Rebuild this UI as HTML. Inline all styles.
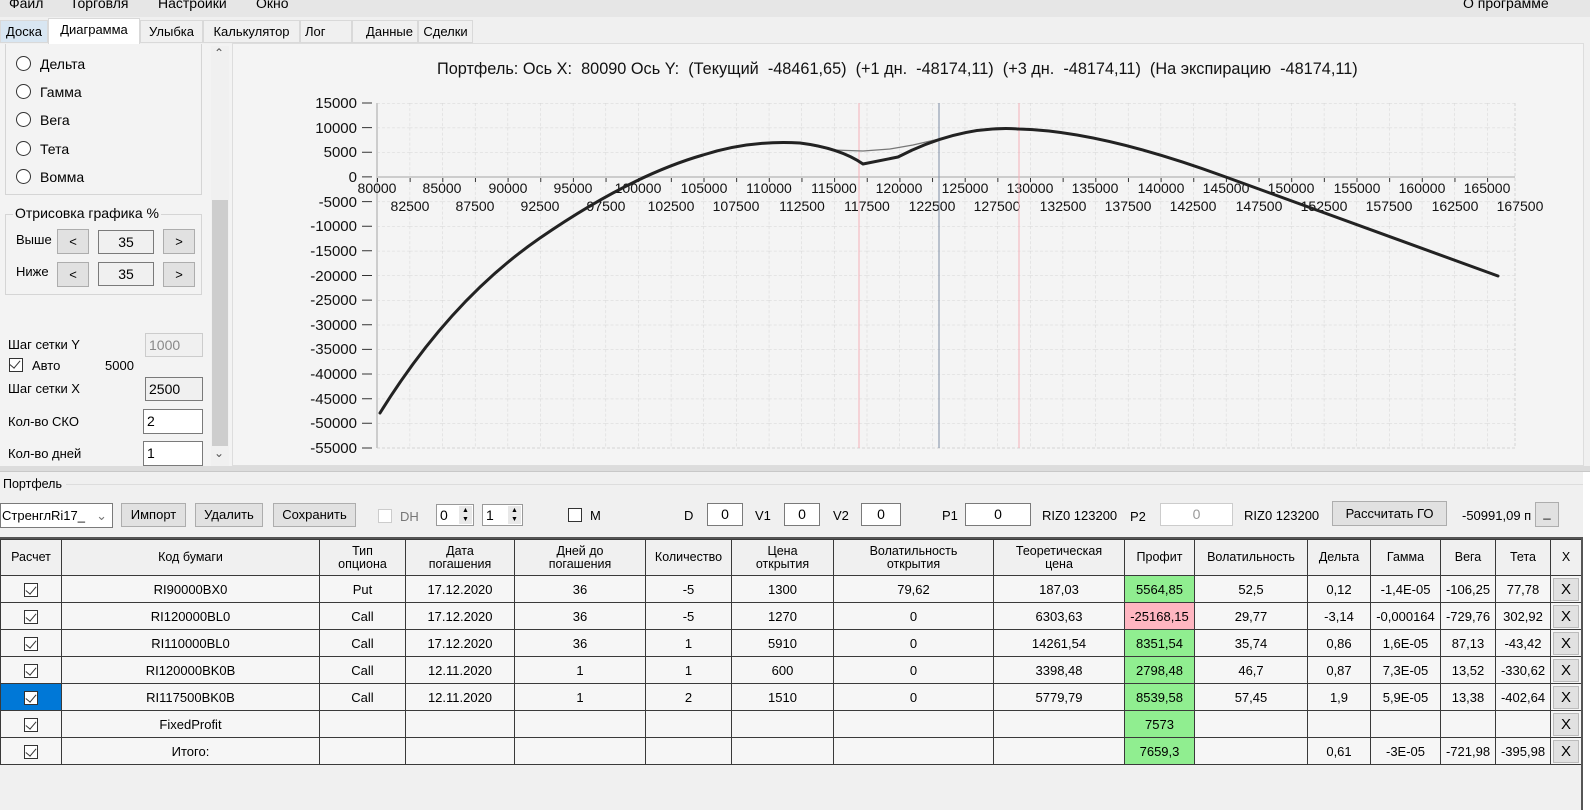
<!DOCTYPE html>
<html><head><meta charset="utf-8">
<style>
*{box-sizing:border-box;margin:0;padding:0}
body{width:1590px;height:810px;overflow:hidden;background:#f0f0f0;font-family:"Liberation Sans",sans-serif;font-size:13px;color:#000;position:relative}
.a{position:absolute}
.menu{left:0;top:0;width:1590px;height:17px;background:#e6e6e6;font-size:14px}
.tab{position:absolute;top:20px;height:23px;border:1px solid #d9d9d9;background:#f0f0f0;font-size:13px;line-height:21px;text-align:center}
.box{border:1px solid #d5d5d5}
.rad{width:15px;height:15px;border:1px solid #333;border-radius:50%;background:#fff}
.btn{position:absolute;background:#e1e1e1;border:1px solid #adadad;text-align:center;font-size:13px}
.tb{position:absolute;background:#fff;border:1px solid #7a7a7a;font-size:14px;padding-left:3px}
.cb{position:absolute;width:14px;height:14px;border:1px solid #333;background:#fff}
table{border-collapse:collapse;position:absolute;left:0;top:539px;table-layout:fixed;width:1581px}
td{border:1px solid #3a3a3a;background:#f6f6f6;text-align:center;font-size:13px;height:27px;padding:0;overflow:hidden;white-space:nowrap}
tr.h td{background:#f0f0f0;height:36px;font-size:12.5px;line-height:13px}
td.g{background:#90ee90}td.p{background:#ffb6c1}
.x{display:block;margin:1px 2px;height:23px;background:#e1e1e1;border:1px solid #bbb;line-height:21px;font-size:15px}
.ck{display:inline-block;width:14px;height:14px;border:1px solid #333;position:relative;vertical-align:middle;background:#fff}
.ck:after{content:"";position:absolute;left:3px;top:0px;width:5px;height:9px;border:solid #333;border-width:0 1.5px 1.5px 0;transform:rotate(40deg)}
</style></head><body>
<div class="a menu"><span class="a" style="left:9px;top:-5px">Файл</span><span class="a" style="left:70px;top:-5px">Торговля</span><span class="a" style="left:158px;top:-5px">Настройки</span><span class="a" style="left:256px;top:-5px">Окно</span><span class="a" style="left:1463px;top:-5px">О программе</span></div>
<div class="tab" style="left:0;width:48px;background:#d8e6f2">Доска</div>
<div class="tab" style="left:48px;width:92px;top:18px;height:27px;background:#fff;border-bottom:none">Диаграмма</div>
<div class="tab" style="left:140px;width:63px">Улыбка</div>
<div class="tab" style="left:203px;width:97px">Калькулятор</div>
<div class="tab" style="left:300px;width:52px;text-align:left;padding-left:4px">Лог</div>
<div class="tab" style="left:352px;width:66px;text-align:right;padding-right:4px">Данные</div>
<div class="tab" style="left:418px;width:55px">Сделки</div>
<div class="a" style="left:0;top:44px;width:232px;height:422px;background:#f3f3f3"></div>
<div class="a box" style="left:5px;top:44px;width:197px;height:151px;border-top:none"></div>
<div class="a rad" style="left:16px;top:56px"></div><span class="a" style="left:40px;top:56px;font-size:14px">Дельта</span>
<div class="a rad" style="left:16px;top:84px"></div><span class="a" style="left:40px;top:84px;font-size:14px">Гамма</span>
<div class="a rad" style="left:16px;top:112px"></div><span class="a" style="left:40px;top:112px;font-size:14px">Вега</span>
<div class="a rad" style="left:16px;top:141px"></div><span class="a" style="left:40px;top:141px;font-size:14px">Тета</span>
<div class="a rad" style="left:16px;top:169px"></div><span class="a" style="left:40px;top:169px;font-size:14px">Вомма</span>
<div class="a box" style="left:5px;top:214px;width:197px;height:81px"></div>
<span class="a" style="left:13px;top:205px;background:#f3f3f3;padding:0 2px;font-size:14px">Отрисовка графика %</span>
<span class="a" style="left:16px;top:232px;font-size:13px">Выше</span>
<div class="btn" style="left:57px;top:229px;width:32px;height:25px;line-height:23px">&lt;</div>
<div class="a" style="left:98px;top:230px;width:56px;height:24px;border:1px solid #7a7a7a;text-align:center;font-size:14px;line-height:22px;background:#f0f0f0">35</div>
<div class="btn" style="left:163px;top:229px;width:32px;height:25px;line-height:23px">&gt;</div>
<span class="a" style="left:16px;top:264px;font-size:13px">Ниже</span>
<div class="btn" style="left:57px;top:262px;width:32px;height:25px;line-height:23px">&lt;</div>
<div class="a" style="left:98px;top:262px;width:56px;height:24px;border:1px solid #7a7a7a;text-align:center;font-size:14px;line-height:22px;background:#f0f0f0">35</div>
<div class="btn" style="left:163px;top:262px;width:32px;height:25px;line-height:23px">&gt;</div>
<span class="a" style="left:8px;top:337px">Шаг сетки Y</span>
<div class="tb" style="left:145px;top:333px;width:58px;height:24px;border-color:#ccc;color:#888;background:#f0f0f0;line-height:22px">1000</div>
<div class="cb" style="left:9px;top:358px"><span class="ck" style="border:none;position:absolute;left:-1px;top:-1px;background:none"></span></div>
<span class="a" style="left:32px;top:358px">Авто</span><span class="a" style="left:105px;top:358px">5000</span>
<span class="a" style="left:8px;top:381px">Шаг сетки X</span>
<div class="tb" style="left:145px;top:377px;width:58px;height:24px;background:#f0f0f0;line-height:22px">2500</div>
<span class="a" style="left:8px;top:414px">Кол-во СКО</span>
<div class="tb" style="left:143px;top:409px;width:60px;height:25px;line-height:23px">2</div>
<span class="a" style="left:8px;top:446px">Кол-во дней</span>
<div class="tb" style="left:143px;top:441px;width:60px;height:25px;line-height:23px">1</div>
<div class="a" style="left:211px;top:46px;width:18px;height:420px;background:#f0f0f0"></div>
<div class="a" style="left:212px;top:200px;width:16px;height:246px;background:#cdcdcd"></div>
<span class="a" style="left:214px;top:46px;font-size:12px;color:#555">&#8963;</span>
<span class="a" style="left:214px;top:446px;font-size:12px;color:#555">&#8964;</span>
<div class="a" style="left:232px;top:43px;width:1352px;height:423px;background:#f4f4f4;border:1px solid #ddd"></div>
<svg class="a" style="left:0;top:0" width="1590" height="470">
<defs><pattern id="gr" patternUnits="userSpaceOnUse" x="377" y="103" width="32.65" height="24.64"><path d="M0,0H32.65M0,0V24.64" stroke="#d4d4d4" stroke-dasharray="3,2" fill="none"/></pattern>
<pattern id="tk" patternUnits="userSpaceOnUse" x="377" y="0" width="32.65" height="10"><path d="M0.5,0V10" stroke="#333"/></pattern></defs>
<rect x="377" y="103" width="1138" height="345" fill="url(#gr)"/>
<line x1="1515" y1="103" x2="1515" y2="448" stroke="#d4d4d4" stroke-dasharray="3,2"/>
<line x1="377" y1="448" x2="1515" y2="448" stroke="#d4d4d4" stroke-dasharray="3,2"/>
<line x1="377" y1="103" x2="377" y2="448" stroke="#ccc" stroke-width="2"/>
<line x1="377" y1="177" x2="1515" y2="177" stroke="#ccc" stroke-width="2"/>
<rect x="377" y="178" width="1140" height="4" fill="url(#tk)"/>
<g stroke="#333"><path d="M362,103H372M362,127.6H372M362,152.3H372M362,176.9H372M362,201.6H372M362,226.2H372M362,250.8H372M362,275.5H372M362,300.1H372M362,324.8H372M362,349.4H372M362,374H372M362,398.7H372M362,423.3H372M362,448H372"/></g>
<g font-family="Liberation Sans" font-size="15" text-anchor="end" fill="#111">
<text x="357" y="108">15000</text><text x="357" y="133">10000</text><text x="357" y="157">5000</text><text x="357" y="182">0</text><text x="357" y="207">-5000</text><text x="357" y="231">-10000</text><text x="357" y="256">-15000</text><text x="357" y="281">-20000</text><text x="357" y="305">-25000</text><text x="357" y="330">-30000</text><text x="357" y="354">-35000</text><text x="357" y="379">-40000</text><text x="357" y="404">-45000</text><text x="357" y="428">-50000</text><text x="357" y="453">-55000</text></g>
<g font-family="Liberation Sans" font-size="14" text-anchor="middle" fill="#111">
<text x="377" y="193">80000</text><text x="442" y="193">85000</text><text x="508" y="193">90000</text><text x="573" y="193">95000</text><text x="638" y="193">100000</text><text x="704" y="193">105000</text><text x="769" y="193">110000</text><text x="834" y="193">115000</text><text x="899" y="193">120000</text><text x="965" y="193">125000</text><text x="1030" y="193">130000</text><text x="1095" y="193">135000</text><text x="1161" y="193">140000</text><text x="1226" y="193">145000</text><text x="1291" y="193">150000</text><text x="1357" y="193">155000</text><text x="1422" y="193">160000</text><text x="1487" y="193">165000</text>
<text x="410" y="211">82500</text><text x="475" y="211">87500</text><text x="540" y="211">92500</text><text x="606" y="211">97500</text><text x="671" y="211">102500</text><text x="736" y="211">107500</text><text x="802" y="211">112500</text><text x="867" y="211">117500</text><text x="932" y="211">122500</text><text x="997" y="211">127500</text><text x="1063" y="211">132500</text><text x="1128" y="211">137500</text><text x="1193" y="211">142500</text><text x="1259" y="211">147500</text><text x="1324" y="211">152500</text><text x="1389" y="211">157500</text><text x="1455" y="211">162500</text><text x="1520" y="211">167500</text></g>
<line x1="859" y1="103" x2="859" y2="448" stroke="#f4b0b8"/>
<line x1="1019" y1="103" x2="1019" y2="448" stroke="#f4b0b8"/>
<line x1="939" y1="103" x2="939" y2="448" stroke="#7d8ca3"/>
<polyline fill="none" stroke="#777" stroke-width="1.3" points="800,143 833,150 863,151 890,149 913,145 939,139"/>
<path fill="none" stroke="#222" stroke-width="3" stroke-linejoin="round" stroke-linecap="round" d="M380,413 Q450,300 540,238 T703,155 Q750,140 800,143 Q840,148 863,164 L898,157 Q960,125 1019,129 Q1100,131 1223,176 L1498,276"/>
<text x="437" y="74" font-family="Liberation Sans" font-size="16.3" fill="#111" xml:space="preserve">Портфель: Ось X:  80090 Ось Y:  (Текущий  -48461,65)  (+1 дн.  -48174,11)  (+3 дн.  -48174,11)  (На экспирацию  -48174,11)</text>
</svg>
<div class="a" style="left:0;top:466px;width:1590px;height:6px;background:#dcdcdc;border-bottom:1px solid #c8c8c8"></div>
<span class="a" style="left:3px;top:477px;font-size:12.5px">Портфель</span>
<div class="a" style="left:66px;top:484px;width:1517px;border-top:1px solid #ddd"></div>
<div class="a" style="left:0;top:503px;width:113px;height:25px;background:#fff;border:1px solid #7a7a7a;font-size:13px;line-height:23px;padding-left:1px">СтренглRi17_ <span style="color:#777;position:absolute;right:5px">&#8964;</span></div>
<div class="btn" style="left:121px;top:503px;width:65px;height:24px;line-height:22px">Импорт</div>
<div class="btn" style="left:195px;top:503px;width:68px;height:24px;line-height:22px">Удалить</div>
<div class="btn" style="left:273px;top:503px;width:83px;height:24px;line-height:22px">Сохранить</div>
<div class="cb" style="left:378px;top:509px;border-color:#ccc"></div><span class="a" style="left:400px;top:509px;color:#777">DH</span>
<div class="tb" style="left:436px;top:504px;width:38px;height:22px;line-height:20px;border-color:#999">0<span style="position:absolute;right:1px;top:1px;width:13px;height:18px;background:#e8e8e8;font-size:7px;line-height:9px;text-align:center">▲<br>▼</span></div>
<div class="tb" style="left:482px;top:504px;width:41px;height:22px;line-height:20px;border-color:#999">1<span style="position:absolute;right:1px;top:1px;width:13px;height:18px;background:#e8e8e8;font-size:7px;line-height:9px;text-align:center">▲<br>▼</span></div>
<div class="cb" style="left:568px;top:508px"></div><span class="a" style="left:590px;top:508px">M</span>
<span class="a" style="left:684px;top:508px">D</span><div class="tb" style="left:707px;top:503px;width:36px;height:23px;text-align:center;padding:0;line-height:21px">0</div>
<span class="a" style="left:755px;top:508px">V1</span><div class="tb" style="left:784px;top:503px;width:36px;height:23px;text-align:center;padding:0;line-height:21px">0</div>
<span class="a" style="left:833px;top:508px">V2</span><div class="tb" style="left:861px;top:503px;width:40px;height:23px;text-align:center;padding:0;line-height:21px">0</div>
<span class="a" style="left:942px;top:508px">P1</span><div class="tb" style="left:965px;top:503px;width:66px;height:23px;text-align:center;padding:0;line-height:21px">0</div>
<span class="a" style="left:1042px;top:508px">RIZ0 123200</span><span class="a" style="left:1130px;top:509px">P2</span>
<div class="tb" style="left:1160px;top:503px;width:73px;height:23px;text-align:center;padding:0;line-height:21px;border-color:#ccc;color:#999">0</div>
<span class="a" style="left:1244px;top:508px">RIZ0 123200</span>
<div class="btn" style="left:1332px;top:501px;width:115px;height:25px;line-height:23px">Рассчитать ГО</div>
<span class="a" style="left:1462px;top:508px">-50991,09 п</span>
<div class="btn" style="left:1535px;top:502px;width:24px;height:25px;line-height:19px">_</div>
<div class="a" style="left:0;top:537px;width:1583px;height:2px;background:#555"></div>
<table>
<colgroup><col style="width:61px"><col style="width:258px"><col style="width:86px"><col style="width:109px"><col style="width:131px"><col style="width:86px"><col style="width:102px"><col style="width:160px"><col style="width:131px"><col style="width:70px"><col style="width:113px"><col style="width:63px"><col style="width:70px"><col style="width:55px"><col style="width:55px"><col style="width:31px"></colgroup>
<tr class="h"><td>Расчет</td><td>Код бумаги</td><td>Тип<br>опциона</td><td>Дата<br>погашения</td><td>Дней до<br>погашения</td><td>Количество</td><td>Цена<br>открытия</td><td>Волатильность<br>открытия</td><td>Теоретическая<br>цена</td><td>Профит</td><td>Волатильность</td><td>Дельта</td><td>Гамма</td><td>Вега</td><td>Тета</td><td>X</td></tr>
<tr><td><span class="ck"></span></td><td>RI90000BX0</td><td>Put</td><td>17.12.2020</td><td>36</td><td>-5</td><td>1300</td><td>79,62</td><td>187,03</td><td class="g">5564,85</td><td>52,5</td><td>0,12</td><td>-1,4E-05</td><td>-106,25</td><td>77,78</td><td><span class="x">X</span></td></tr>
<tr><td><span class="ck"></span></td><td>RI120000BL0</td><td>Call</td><td>17.12.2020</td><td>36</td><td>-5</td><td>1270</td><td>0</td><td>6303,63</td><td class="p">-25168,15</td><td>29,77</td><td>-3,14</td><td>-0,000164</td><td>-729,76</td><td>302,92</td><td><span class="x">X</span></td></tr>
<tr><td><span class="ck"></span></td><td>RI110000BL0</td><td>Call</td><td>17.12.2020</td><td>36</td><td>1</td><td>5910</td><td>0</td><td>14261,54</td><td class="g">8351,54</td><td>35,74</td><td>0,86</td><td>1,6E-05</td><td>87,13</td><td>-43,42</td><td><span class="x">X</span></td></tr>
<tr><td><span class="ck"></span></td><td>RI120000BK0B</td><td>Call</td><td>12.11.2020</td><td>1</td><td>1</td><td>600</td><td>0</td><td>3398,48</td><td class="g">2798,48</td><td>46,7</td><td>0,87</td><td>7,3E-05</td><td>13,52</td><td>-330,62</td><td><span class="x">X</span></td></tr>
<tr><td style="background:#0078d7"><span class="ck"></span></td><td>RI117500BK0B</td><td>Call</td><td>12.11.2020</td><td>1</td><td>2</td><td>1510</td><td>0</td><td>5779,79</td><td class="g">8539,58</td><td>57,45</td><td>1,9</td><td>5,9E-05</td><td>13,38</td><td>-402,64</td><td><span class="x">X</span></td></tr>
<tr><td><span class="ck"></span></td><td>FixedProfit</td><td></td><td></td><td></td><td></td><td></td><td></td><td></td><td class="g">7573</td><td></td><td></td><td></td><td></td><td></td><td><span class="x">X</span></td></tr>
<tr><td><span class="ck"></span></td><td>Итого:</td><td></td><td></td><td></td><td></td><td></td><td></td><td></td><td class="g">7659,3</td><td></td><td>0,61</td><td>-3E-05</td><td>-721,98</td><td>-395,98</td><td><span class="x">X</span></td></tr>
</table>
<div class="a" style="left:1581px;top:537px;width:2px;height:273px;background:#555"></div>
<div class="a" style="left:1583px;top:472px;width:7px;height:338px;background:#fff"></div>
</body></html>
